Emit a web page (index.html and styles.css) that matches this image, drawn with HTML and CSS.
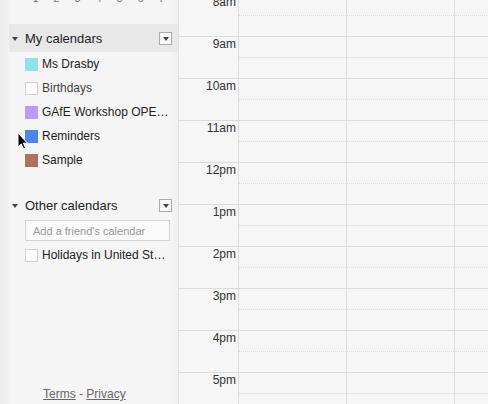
FILE: index.html
```html
<!DOCTYPE html>
<html lang="en">
<head>
  <meta charset="UTF-8" />
  <title>Calendar</title>
  <link rel="stylesheet" href="styles.css">
</head>
<body>
  <aside class="sidebar">
    <div class="mini-row">
      <span>1</span><span>2</span><span>3</span><span>4</span><span>5</span><span>6</span><span>7</span>
    </div>

    <!-- My calendars -->
    <div class="cal-head active">
      <span class="twisty"></span>
      <span class="cal-title">My calendars</span>
      <span class="drop"></span>
    </div>
    <ul class="cal-list">
      <li><span class="swatch" style="background:#92e1ea"></span>Ms Drasby</li>
      <li class="muted"><span class="swatch empty"></span>Birthdays</li>
      <li><span class="swatch" style="background:#b99aff"></span><span class="name">GAfE Workshop OPEN TO ALL</span></li>
      <li><span class="swatch" style="background:#4986e7"></span>Reminders</li>
      <li><span class="swatch" style="background:#ac725e"></span>Sample</li>
    </ul>

    <!-- Other calendars -->
    <div class="cal-head other">
      <span class="twisty"></span>
      <span class="cal-title">Other calendars</span>
      <span class="drop"></span>
    </div>
    <div class="friend">
      <input type="text" placeholder="Add a friend's calendar">
    </div>
    <ul class="cal-list">
      <li><span class="swatch empty"></span><span class="name">Holidays in United States</span></li>
    </ul>

    <div class="foot">
      <a href="#">Terms</a> - <a href="#">Privacy</a>
    </div>
  </aside>

  <main class="grid">
    <div class="hour"><div class="label">8am</div><div class="day"></div><div class="day"></div><div class="day last"></div></div>
    <div class="hour"><div class="label">9am</div><div class="day"></div><div class="day"></div><div class="day last"></div></div>
    <div class="hour"><div class="label">10am</div><div class="day"></div><div class="day"></div><div class="day last"></div></div>
    <div class="hour"><div class="label">11am</div><div class="day"></div><div class="day"></div><div class="day last"></div></div>
    <div class="hour"><div class="label">12pm</div><div class="day"></div><div class="day"></div><div class="day last"></div></div>
    <div class="hour"><div class="label">1pm</div><div class="day"></div><div class="day"></div><div class="day last"></div></div>
    <div class="hour"><div class="label">2pm</div><div class="day"></div><div class="day"></div><div class="day last"></div></div>
    <div class="hour"><div class="label">3pm</div><div class="day"></div><div class="day"></div><div class="day last"></div></div>
    <div class="hour"><div class="label">4pm</div><div class="day"></div><div class="day"></div><div class="day last"></div></div>
    <div class="hour"><div class="label">5pm</div><div class="day"></div><div class="day"></div><div class="day last"></div></div>
  </main>

  <!-- mouse pointer over the list -->
  <svg class="pointer" width="12" height="18" viewBox="0 0 12 18">
    <path d="M1 1 L1 15 L4.2 12 L6.6 17 L8.6 16 L6.3 11.2 L10.5 11.2 Z" fill="#000" stroke="#fff" stroke-width="1"/>
  </svg>
</body>
</html>
```

FILE: styles.css
```css
* {
  box-sizing: border-box;
}

html, body {
  height: 100%;
}

body {
  margin: 0;
  display: flex;
  overflow: hidden;
  background: #f6f6f6;
  font-family: "Liberation Sans", Arial, sans-serif;
  color: #222;
  position: relative;
}

/* Sidebar */
.sidebar {
  width: 178px;
  flex: none;
  display: flex;
  flex-direction: column;
  padding-left: 9px;
  background: linear-gradient(to right, #ebebeb 0, #f0f0f0 8px, #f5f5f5 9px, #f5f5f5 170px, #efefef 178px);
}

.mini-row {
  display: flex;
  margin: -8px 0 0 16px;
  height: 12px;
  font-size: 11px;
  line-height: 12px;
  color: #777;
}

.mini-row span {
  width: 21px;
  text-align: center;
}

.cal-head {
  display: flex;
  align-items: center;
  height: 28px;
  margin-top: 20px;
  padding-right: 6px;
}

.cal-head.active {
  background: #e8e8e8;
}

.cal-head.other {
  margin-top: 19px;
}

.twisty {
  width: 0;
  height: 0;
  margin: 1px 7px 0 3px;
  border-left: 3.5px solid transparent;
  border-right: 3.5px solid transparent;
  border-top: 4px solid #444;
}

.cal-title {
  flex: 1;
  font-size: 13px;
  color: #222;
}

.drop {
  width: 13px;
  height: 13px;
  border: 1px solid #aaa;
  background: #fafafa;
  position: relative;
}

.drop::after {
  content: "";
  position: absolute;
  left: 2.5px;
  top: 4px;
  border-left: 3.5px solid transparent;
  border-right: 3.5px solid transparent;
  border-top: 4px solid #444;
}

.cal-list {
  list-style: none;
  margin: 0;
  padding: 0;
}

.cal-list li {
  display: flex;
  align-items: center;
  height: 24px;
  padding-left: 16px;
  font-size: 12px;
  color: #222;
  white-space: nowrap;
}

.cal-list li.muted {
  color: #444;
}

.name {
  overflow: hidden;
  text-overflow: ellipsis;
  max-width: 128px;
}

.swatch {
  width: 13px;
  height: 13px;
  margin-right: 4px;
  flex: none;
}

.swatch.empty {
  background: #fbfbfb;
  border: 1px solid #d0d0d0;
}

.friend {
  padding: 1px 0 2px 16px;
}

.friend input {
  width: 145px;
  height: 21px;
  margin: 0;
  padding: 0 7px;
  border: 1px solid #d4d4d4;
  background: #fafafa;
  font-family: inherit;
  font-size: 11px;
}

.friend input::placeholder {
  color: #999;
}

.foot {
  margin-top: auto;
  padding: 0 0 3px 34px;
  font-size: 12px;
  color: #666;
}

.foot a {
  color: #666;
}

/* Day grid */
.grid {
  flex: 1;
  margin-top: -6px;
  border-left: 1px solid #e2e2e2;
}

.hour {
  display: flex;
  height: 42px;
  border-top: 1px solid #dcdcdc;
}

.label {
  width: 60px;
  padding-right: 2px;
  border-right: 1px solid #dcdcdc;
  text-align: right;
  font-size: 12px;
  line-height: 14px;
  color: #333;
}

.day {
  width: 108px;
  border-right: 1px solid #dcdcdc;
  padding-top: 20px;
}

.day::before {
  content: "";
  display: block;
  border-top: 1px dotted #dcdcdc;
}

.day.last {
  flex: 1;
  border-right: none;
}

.pointer {
  position: absolute;
  left: 17px;
  top: 132px;
}
```
